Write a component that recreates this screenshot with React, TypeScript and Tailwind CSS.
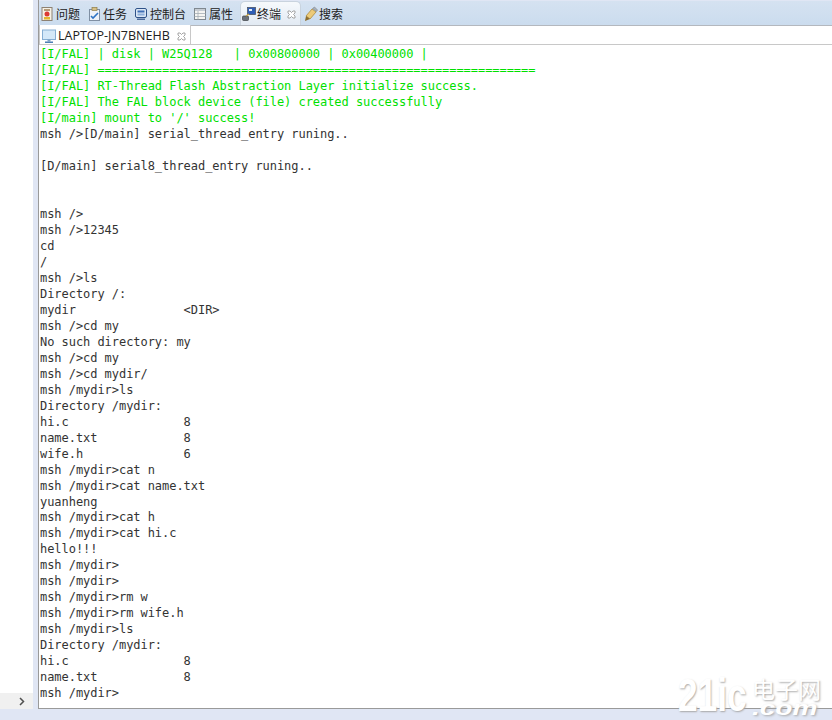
const MONO = "font-['DejaVu_Sans_Mono','Liberation_Mono',monospace]";

const green = [
  "[I/FAL] | disk | W25Q128   | 0x00800000 | 0x00400000 |",
  "[I/FAL] =============================================================",
  "[I/FAL] RT-Thread Flash Abstraction Layer initialize success.",
  "[I/FAL] The FAL block device (file) created successfully",
  "[I/main] mount to '/' success!",
];

const plain = [
  "msh />[D/main] serial_thread_entry runing..",
  "",
  "[D/main] serial8_thread_entry runing..",
  "",
  "",
  "msh />",
  "msh />12345",
  "cd",
  "/",
  "msh />ls",
  "Directory /:",
  "mydir               <DIR>",
  "msh />cd my",
  "No such directory: my",
  "msh />cd my",
  "msh />cd mydir/",
  "msh /mydir>ls",
  "Directory /mydir:",
  "hi.c                8",
  "name.txt            8",
  "wife.h              6",
  "msh /mydir>cat n",
  "msh /mydir>cat name.txt",
  "yuanheng",
  "msh /mydir>cat h",
  "msh /mydir>cat hi.c",
  "hello!!!",
  "msh /mydir>",
  "msh /mydir>",
  "msh /mydir>rm w",
  "msh /mydir>rm wife.h",
  "msh /mydir>ls",
  "Directory /mydir:",
  "hi.c                8",
  "name.txt            8",
  "msh /mydir>",
];

const ProblemIcon = () => (
  <svg width="14" height="16" viewBox="0 0 14 16">
    <rect x="2" y="1.500" width="10" height="13" fill="#f6f1e6" stroke="#8d8172" />
    <rect x="4" y="3" width="6" height="2" fill="#b59a78" />
    <circle cx="7" cy="8" r="2.500" fill="#dc3a32" />
    <rect x="4" y="11" width="6" height="2.500" fill="#e3b52f" />
  </svg>
);

const TaskIcon = () => (
  <svg width="14" height="16" viewBox="0 0 14 16">
    <rect x="2.500" y="3.500" width="10" height="11" fill="#eef3f8" stroke="#7f8fa3" />
    <rect x="5" y="1.500" width="5" height="3" fill="#d5bf86" stroke="#8f7c45" strokeWidth="0.7" />
    <path d="M4 10l2 2 5-5" fill="none" stroke="#2f74c4" strokeWidth="1.600" />
  </svg>
);

const ConsoleIcon = () => (
  <svg width="14" height="16" viewBox="0 0 14 16">
    <rect x="1.500" y="2.500" width="11" height="9" rx="1.500" fill="#dbe7f5" stroke="#2f5288" />
    <rect x="3.500" y="4.500" width="7" height="2" fill="#3f6fb5" />
    <rect x="3.500" y="7.500" width="7" height="2" fill="#8fb0da" />
    <rect x="3" y="12.500" width="8" height="1.500" fill="#4f6d9c" />
  </svg>
);

const PropsIcon = () => (
  <svg width="14" height="16" viewBox="0 0 14 16">
    <rect x="1.500" y="2.500" width="11" height="11" fill="#f5f5f2" stroke="#7f8890" />
    <rect x="2" y="3" width="10" height="2" fill="#c6ccd3" />
    <path d="M1.500 7.500h11M1.500 10.500h11M5 5v8.500" stroke="#a5adb5" strokeWidth="0.8" />
  </svg>
);

const TerminalIcon = () => (
  <svg width="14" height="16" viewBox="0 0 14 16">
    <rect x="5.500" y="1.500" width="8" height="7" fill="#2f5db5" stroke="#4a5566" strokeWidth="0.8" />
    <rect x="7" y="3" width="3" height="2" fill="#e6edf7" />
    <rect x="0.500" y="10" width="6" height="4.500" rx="1" fill="#6b7078" stroke="#3c4046" strokeWidth="0.7" />
    <path d="M4 10l3-2" stroke="#c9a23f" strokeWidth="1.400" />
  </svg>
);

const SearchIcon = () => (
  <svg width="16" height="16" viewBox="0 0 16 16">
    <path d="M3 10l6-7 4 3-6 7z" fill="#ecca78" stroke="#ad8b3e" strokeWidth="0.8" />
    <path d="M9.500 2.500l4 3 1-1.500-3-3z" fill="#aab1b8" stroke="#7b828a" strokeWidth="0.6" />
    <path d="M3 10l4 3-5 2z" fill="#8c6d2e" />
  </svg>
);

const MonitorIcon = () => (
  <svg width="14" height="15" viewBox="0 0 14 15">
    <rect x="0.500" y="1" width="13" height="9.500" fill="#d4e8f9" stroke="#86aed4" />
    <rect x="5.500" y="10.500" width="3" height="2" fill="#7fa3c8" />
    <rect x="3" y="12.500" width="8" height="1.500" fill="#4d7fb5" />
  </svg>
);

const CloseX = () => (
  <svg width="9" height="9" viewBox="0 0 9 9" className="shrink-0">
    <path d="M1 1h2l1.500 1.500L6 1h2v2L6.500 4.500 8 6v2H6L4.500 6.500 3 8H1V6l1.500-1.500L1 3z" fill="#fff" stroke="#8f8f8f" strokeWidth="0.8" />
  </svg>
);

const tabs = [
  { label: "问题", icon: <ProblemIcon />, width: "w-[47px]" },
  { label: "任务", icon: <TaskIcon />, width: "w-[47px]" },
  { label: "控制台", icon: <ConsoleIcon />, width: "w-[59px]" },
  { label: "属性", icon: <PropsIcon />, width: "w-[48px]" },
];

export default function App() {
  return (
    <div className="relative flex h-[720px] w-[832px] overflow-hidden bg-[#e0e6f4] font-['Noto_Sans_CJK_SC',sans-serif]">
      {/* left view, cut off */}
      <div className="flex h-[709px] w-[33px] shrink-0 flex-col justify-end bg-white">
        <div className="flex h-[16px] items-center justify-end bg-[#f0f0f0] pr-2">
          <svg width="6" height="9" viewBox="0 0 6 9">
            <path d="M1 1l3.500 3.500L1 8" fill="none" stroke="#505050" strokeWidth="1.500" />
          </svg>
        </div>
      </div>

      <div className="ml-[5px] flex h-[709px] min-w-0 flex-1 flex-col border-b border-l border-[#9a9a9a] bg-white">
        {/* view tabs */}
        <div className="flex h-[26px] shrink-0 items-end border-b border-[#b4b8be] bg-[#e0e6f4] text-[12px] text-[#222]">
          <div className="flex h-[24px] w-full items-end bg-gradient-to-b from-[#d5e2f1] to-[#cbdcee]">
            {tabs.map((t) => (
              <div key={t.label} className={`flex h-[24px] items-center gap-[2px] pl-[1px] pt-[1px] ${t.width}`}>
                {t.icon}
                <span className="whitespace-nowrap">{t.label}</span>
              </div>
            ))}
            <div className="flex h-[24px] w-[61px] items-center gap-[1px] rounded-t-[5px] border-x border-t border-[#c9d3de] bg-gradient-to-b from-[#f6f9fc] to-[#e2eaf3] pl-[1px] pt-[1px]">
              <TerminalIcon />
              <span className="whitespace-nowrap">终端</span>
              <span className="ml-[5px]"><CloseX /></span>
            </div>
            <div className="flex h-[24px] items-center pl-[2px] pt-[1px]">
              <SearchIcon />
              <span className="whitespace-nowrap">搜索</span>
            </div>
          </div>
        </div>

        {/* connection tab */}
        <div className="flex h-[19px] shrink-0 items-end border-b border-[#c8c8c8]">
          <div className="flex h-[19px] w-[152px] items-center gap-[2px] border-x border-[#c8c8c8] bg-white pl-[2px] pt-[3px] font-['Open_Sans',sans-serif] text-[12.500px] text-[#222]">
            <MonitorIcon />
            <span className="whitespace-nowrap">LAPTOP-JN7BNEHB</span>
            <span className="ml-[5px]"><CloseX /></span>
          </div>
        </div>

        {/* terminal output */}
        <div className={`min-h-0 flex-1 overflow-hidden pl-[1px] pt-[1.400px] text-[12px] leading-[16px] tracking-[-0.045px] ${MONO}`}>
          {green.map((l, i) => (
            <div key={i} className="h-[15.970px] whitespace-pre text-[#00e000]">{l}</div>
          ))}
          {plain.map((l, i) => (
            <div key={i} className="h-[15.970px] whitespace-pre text-[#333]">{l}</div>
          ))}
        </div>
      </div>

      {/* watermark */}
      <div className="absolute left-[678px] top-[672px] flex font-['Liberation_Sans',sans-serif] font-bold text-white [text-shadow:1px_1px_2px_#a8a8a8]">
        <span className="w-[74px] origin-left scale-x-[0.75] text-[47px] leading-[46px]">21ic</span>
        <div className="flex flex-col items-start pt-[4px]">
          <span className="font-['Noto_Sans_CJK_SC',sans-serif] text-[23px] font-normal leading-[24px]">电子网</span>
          <span className="mt-[2px] origin-left scale-x-[1.400] text-[20px] italic leading-[13px]">.com</span>
        </div>
      </div>
    </div>
  );
}
